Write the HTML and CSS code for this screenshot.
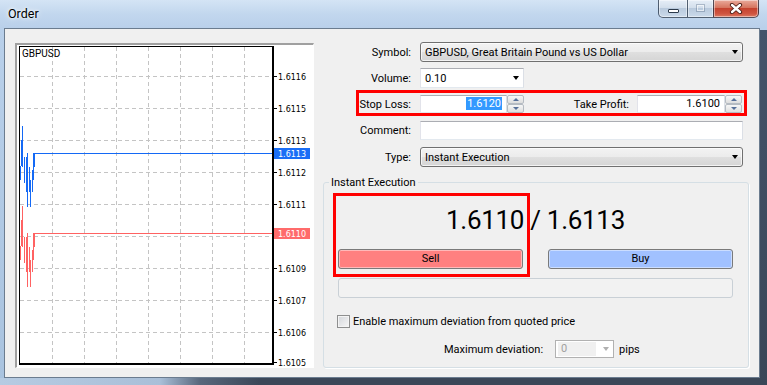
FILE: index.html
```html
<!DOCTYPE html>
<html lang="en">
<head>
  <meta charset="UTF-8">
  <meta name="viewport" content="width=device-width, initial-scale=1.0">
  <title>Order</title>
  <link rel="stylesheet" href="styles.css">
</head>
<body>
  <div class="titlebar">
    <span class="title">Order</span>
    <div class="controls">
      <span class="ctl min"><i></i></span>
      <span class="ctl max"><i></i></span>
      <span class="ctl close">
        <svg width="14" height="11" viewBox="0 0 14 11">
          <path d="M3 2l8 7M11 2l-8 7" stroke="#4a1c14" stroke-width="4.2" stroke-linecap="round"/>
          <path d="M3 2l8 7M11 2l-8 7" stroke="#fff" stroke-width="2.4" stroke-linecap="round"/>
        </svg>
      </span>
    </div>
  </div>

  <div class="client">
    <div class="chart-frame">
      <svg class="chart" width="296" height="322" viewBox="17 45 296 322">
        <g fill="none" stroke="#c4c4c4" stroke-dasharray="4 3">
          <path d="M52.5 47V363M84.5 47V363M116.5 47V363M148.5 47V363M180.5 47V363M212.5 47V363M244.5 47V363"/>
          <path d="M20 76.5H272M20 108.5H272M20 140.5H272M20 172.5H272M20 204.5H272M20 236.5H272M20 268.5H272M20 300.5H272M20 332.5H272"/>
        </g>
        <g fill="none" stroke="#000">
          <path d="M19.5 46V365M19 46.5H274"/>
          <path d="M273 46V365M19 364H274" stroke-width="2"/>
          <path d="M274 76.5H277M274 108.5H277M274 140.5H277M274 172.5H277M274 204.5H277M274 236.5H277M274 268.5H277M274 300.5H277M274 332.5H277M274 362.5H277"/>
        </g>
        <g fill="none" stroke="#1469f5">
          <path d="M20.5 166V180M21.5 140V166M22.5 126V167M24.5 157V183M26.5 157V192M27.5 153V207M29.5 167V192M30.5 180V207M32.5 170V192M33.5 153V180M34.5 153V167M34 153.5H272"/>
        </g>
        <g fill="none" stroke="#ff6262" transform="translate(0 80)">
          <path d="M20.5 166V180M21.5 140V166M22.5 126V167M24.5 157V183M26.5 157V192M27.5 153V207M29.5 167V192M30.5 180V207M32.5 170V192M33.5 153V180M34.5 153V167M34 153.5H272"/>
        </g>
        <text class="symbol" x="22" y="57">GBPUSD</text>
        <g class="axis">
          <text x="278" y="79.5">1.6116</text>
          <text x="278" y="111.5">1.6115</text>
          <text x="278" y="143.5">1.6113</text>
          <text x="278" y="175.5">1.6112</text>
          <text x="278" y="207.5">1.6111</text>
          <text x="278" y="271.5">1.6109</text>
          <text x="278" y="303.5">1.6107</text>
          <text x="278" y="335.5">1.6106</text>
          <text x="278" y="365.5">1.6105</text>
        </g>
        <rect x="274" y="148" width="36" height="11" fill="#1a6ef6"/>
        <text class="tag" x="278" y="156.5">1.6113</text>
        <rect x="274" y="228" width="36" height="11" fill="#ff6b6b"/>
        <text class="tag" x="278" y="236.5">1.6110</text>
      </svg>
    </div>

    <div class="panel">
      <div class="row">
        <span class="lbl">Symbol:</span>
        <div class="combo wide">GBPUSD, Great Britain Pound vs US Dollar<span class="arrow"></span></div>
      </div>
      <div class="row volume-row">
        <span class="lbl">Volume:</span>
        <div class="combo edit">0.10<span class="arrow"></span></div>
      </div>
      <div class="row stops">
        <span class="lbl short">Stop Loss:</span>
        <div class="spin">
          <div class="spin-field"><span class="sel">1.6120</span></div>
          <div class="spin-btns"><span><b class="up"></b></span><span><b class="down"></b></span></div>
        </div>
        <span class="tp-lbl">Take Profit:</span>
        <div class="spin tp">
          <div class="spin-field">1.6100</div>
          <div class="spin-btns"><span><b class="up"></b></span><span><b class="down"></b></span></div>
        </div>
      </div>
      <div class="row comment-row">
        <span class="lbl">Comment:</span>
        <div class="field"></div>
      </div>
      <div class="row type-row">
        <span class="lbl">Type:</span>
        <div class="combo wide">Instant Execution<span class="arrow"></span></div>
      </div>

      <div class="group">
        <div class="group-title">Instant Execution</div>
        <div class="price">1.6110 / 1.6113</div>
        <div class="trade">
          <div class="btn sell">Sell</div>
          <div class="btn buy">Buy</div>
        </div>
        <div class="status"></div>
        <div class="check-row">
          <span class="checkbox"></span>
          <span>Enable maximum deviation from quoted price</span>
        </div>
        <div class="dev-row">
          <span>Maximum deviation:</span>
          <div class="dev-combo"><span class="dev-val">0</span><span class="arrow grey"></span></div>
          <span>pips</span>
        </div>
        <div class="highlight"></div>
      </div>
    </div>
  </div>
</body>
</html>
```

FILE: styles.css
```css
* {
  margin: 0;
  padding: 0;
  box-sizing: border-box;
}

body {
  width: 767px;
  height: 385px;
  overflow: hidden;
  font-family: Roboto, "Liberation Sans", sans-serif;
  font-size: 11px;
  color: #000;
  background:
    linear-gradient(#44536a, #3a4657) right 0 top 30px / 7px 355px no-repeat,
    linear-gradient(to right, #b6cbe2 0, #a9bfd8 160px, #58677c 200px, #3b4758 260px) left 0 bottom 0 / 100% 7px no-repeat,
    linear-gradient(#d4e4f5 0, #c2d7ee 14px, #b9d0ea 28px, #a9c3df 100%);
}

/* window chrome */
.titlebar {
  height: 28px;
  display: flex;
  align-items: flex-start;
}

.title {
  padding: 6px 0 0 8px;
  font-size: 12.5px;
  line-height: 15px;
  text-shadow: 0 0 6px #fff, 0 0 3px #fff;
}

.controls {
  margin-left: auto;
  margin-right: 8px;
  display: flex;
}

.ctl {
  height: 18px;
  border: 1px solid rgba(34, 50, 70, 0.75);
  border-top: none;
  background: linear-gradient(#e6eef7, #d3dfec 45%, #b9cadd 50%, #cbdaea);
  box-shadow: inset 0 0 0 1px rgba(255, 255, 255, 0.45);
}

.ctl i {
  display: block;
}

.min {
  width: 29px;
  border-right: none;
  border-radius: 0 0 0 5px;
}

.min i {
  width: 11px;
  height: 4px;
  margin: 9px auto 0;
  background: #fff;
  border: 1px solid #2c3b4c;
  border-radius: 1px;
}

.max {
  width: 26px;
  border-right: none;
}

.max i {
  width: 9px;
  height: 8px;
  margin: 4px auto 0;
  border: 1px solid rgba(80, 100, 125, 0.35);
  box-shadow: inset 0 0 0 1px rgba(255, 255, 255, 0.6);
}

.close {
  width: 46px;
  border-radius: 0 0 5px 0;
  background: linear-gradient(#eaab9c, #d6755f 45%, #c5432f 50%, #cf5440 80%, #dc7a62);
  display: flex;
  justify-content: center;
  padding-top: 3px;
}

.client {
  margin: 0 7px 0 4px;
  height: 350px;
  border: 1px solid #6b7c8f;
  background: #f0f0f0;
  display: flex;
  align-items: flex-start;
  padding: 14px 10px 0 10px;
}

/* chart */
.chart-frame {
  width: 299px;
  height: 325px;
  border-style: solid;
  border-width: 2px 1px 1px 2px;
  border-color: #a0a0a0 #fff #fff #a0a0a0;
  background: #fff;
}

.chart {
  display: block;
}

.chart .symbol {
  font-family: Roboto, sans-serif;
  font-size: 10px;
}

.chart .axis text,
.chart .tag {
  font-family: "DejaVu Sans", sans-serif;
  font-size: 8px;
}

.chart .tag {
  fill: #fff;
}

/* order form */
.panel {
  margin: -1px 0 0 9px;
  width: 426px;
}

.row {
  display: flex;
  align-items: center;
}

.lbl {
  width: 88px;
  margin-right: 9px;
  text-align: right;
}

.volume-row {
  margin-top: 6px;
}

.comment-row {
  margin-top: 5px;
}

.type-row {
  margin-top: 7px;
}

.combo {
  height: 20px;
  display: flex;
  align-items: center;
  padding-left: 4px;
  border: 1px solid #707070;
  border-radius: 3px;
  background: linear-gradient(#f3f3f3, #ececec 48%, #dfdfdf 52%, #d5d5d5);
  box-shadow: inset 0 0 0 1px rgba(255, 255, 255, 0.7);
}

.combo.wide {
  width: 323px;
}

.combo.edit {
  width: 104px;
  border-radius: 0;
  border-color: #abadb3 #dbdfe6 #e3e9ef #e2e3ea;
  background: #fff;
  box-shadow: none;
}

.arrow {
  margin-left: auto;
  margin-right: 4px;
  width: 0;
  height: 0;
  border-left: 3.5px solid transparent;
  border-right: 3.5px solid transparent;
  border-top: 4px solid #000;
}

.arrow.grey {
  border-top-color: #b0b0b0;
}

.stops {
  margin-top: 2px;
  margin-left: 33px;
  width: 391px;
  height: 26px;
  border: 3px solid #f00;
  padding: 2px 2px 0 0;
}

.lbl.short {
  width: 52px;
}

.tp-lbl {
  margin-left: auto;
  margin-right: 8px;
}

.spin {
  width: 104px;
  height: 18px;
  display: flex;
}

.spin.tp {
  width: 105px;
}

.spin-field {
  flex: 1;
  border: 1px solid;
  border-color: #abadb3 #dbdfe6 #e3e9ef #e2e3ea;
  background: #fff;
  text-align: right;
  padding-right: 4px;
  line-height: 16px;
}

.sel {
  background: #3399ff;
  color: #fff;
  padding: 0 1px;
}

.spin-btns {
  width: 17px;
  display: flex;
  flex-direction: column;
}

.spin-btns span {
  flex: 1;
  display: flex;
  align-items: center;
  justify-content: center;
  border: 1px solid #b5bbc2;
  border-radius: 2px;
  background: linear-gradient(#f7f7f7, #dedede);
}

.spin-btns b {
  width: 0;
  height: 0;
  border-left: 3px solid transparent;
  border-right: 3px solid transparent;
}

.spin-btns .up {
  border-bottom: 3px solid #57709a;
}

.spin-btns .down {
  border-top: 3px solid #57709a;
}

.field {
  width: 323px;
  height: 19px;
  border: 1px solid;
  border-color: #abadb3 #dbdfe6 #e3e9ef #e2e3ea;
  background: #fff;
}

/* execution group */
.group {
  position: relative;
  margin-top: 15px;
  border: 1px solid #d5dfe5;
  border-radius: 3px;
  box-shadow: 1px 1px 0 #fff;
  padding: 0 15px 9px 14px;
}

.group-title {
  display: table;
  margin: -8px 0 0 -9px;
  padding: 0 2px;
  background: #f0f0f0;
  line-height: 15px;
}

.price {
  margin-top: 15px;
  height: 30px;
  line-height: 30px;
  text-align: center;
  font-size: 26px;
  letter-spacing: -0.3px;
}

.trade {
  margin-top: 14px;
  display: flex;
  justify-content: space-between;
}

.btn {
  width: 185px;
  height: 20px;
  border: 1px solid #7a7a7a;
  border-radius: 3px;
  box-shadow: inset 0 0 0 1px rgba(255, 255, 255, 0.45);
  text-align: center;
  line-height: 18px;
}

.sell {
  background: #ff8080;
}

.buy {
  background: #a1c1ff;
}

.status {
  margin-top: 9px;
  height: 20px;
  border: 1px solid #c9d0d6;
  border-radius: 3px;
  background: #f2f2f2;
}

.check-row {
  margin-top: 16px;
  margin-left: -1px;
  height: 15px;
  display: flex;
  align-items: center;
}

.checkbox {
  width: 13px;
  height: 13px;
  margin-right: 3px;
  border: 1px solid #8e8f8f;
  background: linear-gradient(135deg, #d3d6da, #f7f7f7);
  box-shadow: inset 0 0 0 1px #f4f4f4;
}

.dev-row {
  margin-top: 11px;
  padding-left: 106px;
  height: 18px;
  display: flex;
  align-items: center;
}

.dev-combo {
  width: 59px;
  height: 18px;
  margin: 0 5px 0 12px;
  border: 1px solid #b1b1b1;
  background: #fff;
  display: flex;
  align-items: center;
}

.dev-val {
  width: 38px;
  height: 14px;
  margin-left: 2px;
  padding-left: 3px;
  line-height: 14px;
  background: #f0f0f0;
  color: #a0a0a0;
}

.highlight {
  position: absolute;
  left: 9px;
  top: 10px;
  width: 197px;
  height: 84px;
  border: 3px solid #f00;
}
```
